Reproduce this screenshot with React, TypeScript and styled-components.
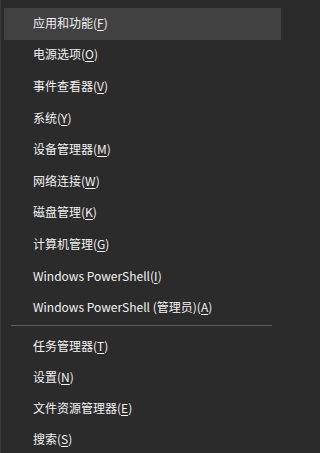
import React from 'react';
import styled, { createGlobalStyle } from 'styled-components';

const GlobalStyle = createGlobalStyle`
  html, body {
    margin: 0;
    padding: 0;
    background: #2b2b2b;
  }
  body {
    font-family: "Noto Sans CJK SC", "Noto Sans", sans-serif;
    overflow: hidden;
  }
`;

const Menu = styled.div`
  width: 282px;
  height: 453px;
  box-sizing: border-box;
  padding: 8px 1px 0 3px;
  background: #2b2b2b;
  border-left: 1px solid #3a3a3a;
  overflow: hidden;
`;

const Item = styled.div<{ active?: boolean; compact?: boolean }>`
  display: flex;
  align-items: center;
  height: ${({ compact }) => (compact ? '31px' : '31.6px')};
  box-sizing: border-box;
  padding: 0 0 3px 29px;
  background: ${({ active }) => (active ? '#414141' : 'transparent')};
  color: #f2f2f2;
  font-size: 12px;
  white-space: nowrap;
  u {
    text-underline-offset: 2px;
  }
`;

const Separator = styled.div`
  height: 1px;
  margin: 1px 9px 6px 7px;
  background: #5c5c5c;
`;

interface IEntry {
  label: string;
  key: string;
}

const topItems: IEntry[] = [
  { label: '应用和功能', key: 'F' },
  { label: '电源选项', key: 'O' },
  { label: '事件查看器', key: 'V' },
  { label: '系统', key: 'Y' },
  { label: '设备管理器', key: 'M' },
  { label: '网络连接', key: 'W' },
  { label: '磁盘管理', key: 'K' },
  { label: '计算机管理', key: 'G' },
  { label: 'Windows PowerShell', key: 'I' },
  { label: 'Windows PowerShell (管理员)', key: 'A' },
];

const bottomItems: IEntry[] = [
  { label: '任务管理器', key: 'T' },
  { label: '设置', key: 'N' },
  { label: '文件资源管理器', key: 'E' },
  { label: '搜索', key: 'S' },
];

function Entry({
  label,
  k,
  active,
  compact,
}: {
  label: string;
  k: string;
  active?: boolean;
  compact?: boolean;
}) {
  return (
    <Item active={active} compact={compact}>
      {label}(<u>{k}</u>)
    </Item>
  );
}

export default function App() {
  return (
    <>
      <GlobalStyle />
      <Menu>
        {topItems.map((item, i) => (
          <Entry key={item.key} label={item.label} k={item.key} active={i === 0} />
        ))}
        <Separator />
        {bottomItems.map((item) => (
          <Entry key={item.key} label={item.label} k={item.key} compact />
        ))}
      </Menu>
    </>
  );
}
